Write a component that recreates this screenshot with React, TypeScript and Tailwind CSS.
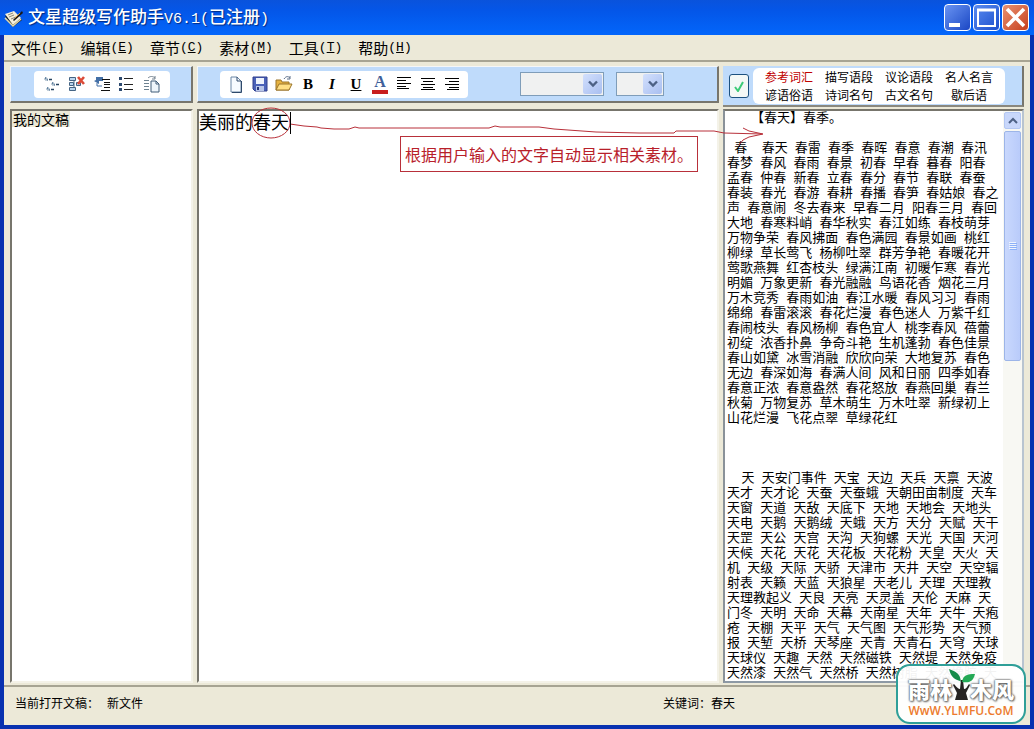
import { Fragment, useState } from "react";
import type { ReactNode } from "react";

const MENUS = [
  { label: "文件", key: "F" },
  { label: "编辑", key: "E" },
  { label: "章节", key: "C" },
  { label: "素材", key: "M" },
  { label: "工具", key: "T" },
  { label: "帮助", key: "H" },
];

const TABS = [
  "参考词汇",
  "描写语段",
  "议论语段",
  "名人名言",
  "谚语俗语",
  "诗词名句",
  "古文名句",
  "歇后语",
];

const SPRING = [
  " 春  春天 春雷 春季 春晖 春意 春潮 春汛",
  "春梦 春风 春雨 春景 初春 早春 暮春 阳春",
  "孟春 仲春 新春 立春 春分 春节 春联 春蚕",
  "春装 春光 春游 春耕 春播 春笋 春姑娘 春之",
  "声 春意闹 冬去春来 早春二月 阳春三月 春回",
  "大地 春寒料峭 春华秋实 春江如练 春枝萌芽",
  "万物争荣 春风拂面 春色满园 春景如画 桃红",
  "柳绿 草长莺飞 杨柳吐翠 群芳争艳 春暖花开",
  "莺歌燕舞 红杏枝头 绿满江南 初暖乍寒 春光",
  "明媚 万象更新 春光融融 鸟语花香 烟花三月",
  "万木竞秀 春雨如油 春江水暖 春风习习 春雨",
  "绵绵 春雷滚滚 春花烂漫 春色迷人 万紫千红",
  "春闹枝头 春风杨柳 春色宜人 桃李春风 蓓蕾",
  "初绽 浓香扑鼻 争奇斗艳 生机蓬勃 春色佳景",
  "春山如黛 冰雪消融 欣欣向荣 大地复苏 春色",
  "无边 春深如海 春满人间 风和日丽 四季如春",
  "春意正浓 春意盎然 春花怒放 春燕回巢 春兰",
  "秋菊 万物复苏 草木萌生 万木吐翠 新绿初上",
  "山花烂漫 飞花点翠 草绿花红",
];

const SKY = [
  "  天 天安门事件 天宝 天边 天兵 天禀 天波",
  "天才 天才论 天蚕 天蚕蛾 天朝田亩制度 天车",
  "天窗 天道 天敌 天底下 天地 天地会 天地头",
  "天电 天鹅 天鹅绒 天蛾 天方 天分 天赋 天干",
  "天罡 天公 天宫 天沟 天狗螺 天光 天国 天河",
  "天候 天花 天花 天花板 天花粉 天皇 天火 天",
  "机 天级 天际 天骄 天津市 天井 天空 天空辐",
  "射表 天籁 天蓝 天狼星 天老儿 天理 天理教",
  "天理教起义 天良 天亮 天灵盖 天伦 天麻 天",
  "门冬 天明 天命 天幕 天南星 天年 天牛 天疱",
  "疮 天棚 天平 天气 天气图 天气形势 天气预",
  "报 天堑 天桥 天琴座 天青 天青石 天穹 天球",
  "天球仪 天趣 天然 天然磁铁 天然堤 天然免疫",
  "天然漆 天然气 天然桥 天然树脂 天然橡胶 天",
];

function Lines({ rows }: { rows: string[] }) {
  return (
    <>
      {rows.map((row, i) => (
        <p key={i} className="h-[15px] whitespace-pre">
          {row.split(" ").map((word, j) => (
            <Fragment key={j}>
              {j > 0 && " "}
              <span className="text-[13px]">{word}</span>
            </Fragment>
          ))}
        </p>
      ))}
    </>
  );
}

function IconButton({ label, children }: { label: string; children: ReactNode }) {
  return (
    <button type="button" aria-label={label} className="flex size-5 items-center justify-center">
      <svg viewBox="0 0 18 18" className="size-[18px]" fill="none">
        {children}
      </svg>
    </button>
  );
}

function OutlineTools() {
  return (
    <div className="flex h-[27px] items-center gap-[5px] rounded bg-white px-2">
      <IconButton label="新建章节">
        <path d="M2 3h2v2H2zM9 8h2v2H9zM4 13h2v2H4z" stroke="#8aa2b6" />
        <path d="M2 3h1M4 5h1M9 8h1M11 10h1M4 13h1M6 15h1" stroke="#1d4a78" />
        <path d="M6 4.500h3M13 9.500h3M8 14.500h3" stroke="#27435f" strokeWidth="1.300" />
      </IconButton>
      <IconButton label="删除章节">
        <path d="M8 4.500H6v9h2M2 8.500h4" stroke="#4b6a88" />
        <path d="M1.500 2.500h6v3h-6zM1.500 7.500h4v3h-4zM1.500 12.500h6v3h-6zM8.500 7.500h4v3h-4z" fill="#b9d5ef" stroke="#456484" />
        <path d="m10 2 6 7m0-7-6 7" stroke="#dc4b38" strokeWidth="2.600" />
      </IconButton>
      <IconButton label="移动章节">
        <path d="M3 2h7v4H6v3L1 6l2-1z" fill="#436fa6" />
        <path d="M9 4.500h8M11 7.500h6M11 9.500h6M11 12.500h6M8 15.500h9" stroke="#111" />
        <path d="M4 8v3h5" stroke="#436fa6" />
      </IconButton>
      <IconButton label="章节列表">
        <path d="M1 2h3v3H1zM1 8h3v3H1zM1 13h3v3H1z" fill="#2d4a70" />
        <path d="M6 3.500h9M6 9.500h9M6 14.500h9" stroke="#222" />
      </IconButton>
      <IconButton label="复制章节">
        <path d="M1 5.500h5M1 8.500h5M1 11.500h5M1 14.500h5" stroke="#6e8290" />
        <path d="M8 6h5l3 3v8H8z" fill="#eef5fb" stroke="#405d78" />
        <path d="M13 6v3h3" stroke="#405d78" />
        <path d="M5 3c2-2 5-2 7 0M12 1v3H9" stroke="#6f7e8c" />
      </IconButton>
    </div>
  );
}

function EditTools() {
  return (
    <div className="flex h-[27px] items-center gap-1 rounded bg-white px-1.5">
      <IconButton label="新建">
        <path d="M4 2h6l4 4v11H4z" fill="#f7fbff" stroke="#6a86a5" />
        <path d="M10 2v4h4M14.500 6v11.500H5" stroke="#2e496b" />
      </IconButton>
      <IconButton label="保存">
        <path d="M2 2h14v14H4l-2-2z" fill="#4a61b8" stroke="#2e3f8c" />
        <path d="M5 3h8v6H5z" fill="#eef3fc" />
        <path d="M5 11h8v5H5z" fill="#b9c6e8" />
        <path d="M6 12h2v3H6z" fill="#26357a" />
      </IconButton>
      <IconButton label="打开">
        <path d="M1 15V5h5l1 2h7v8z" fill="#e6b240" stroke="#9a742a" />
        <path d="m1 15 3-6h13l-3 6z" fill="#ffdf84" stroke="#9a742a" />
        <path d="M9 4c2-3 4-3 6-1m0-2v3h-3" stroke="#5c6f88" />
      </IconButton>
      <button type="button" className="size-5 font-[Liberation_Serif,serif] text-[15px] leading-5 font-bold">
        B
      </button>
      <button type="button" className="size-5 font-[Liberation_Serif,serif] text-[15px] leading-5 font-bold italic">
        I
      </button>
      <button
        type="button"
        className="size-5 font-[Liberation_Serif,serif] text-[15px] leading-5 font-bold underline"
      >
        U
      </button>
      <button
        type="button"
        className="flex size-5 flex-col items-center font-[Liberation_Serif,serif] text-base leading-4 font-bold text-[#3f5f9a]"
      >
        A
        <span className="h-1 w-4 bg-[#c81e1e]" />
      </button>
      <IconButton label="左对齐">
        <path d="M2 2.500h14M2 5.500h9M2 8.500h14M2 11.500h9M2 13.500h12" stroke="#000" />
      </IconButton>
      <IconButton label="居中">
        <path d="M2 3.500h14M4 6.500h10M2 9.500h14M4 12.500h10M2 14.500h14" stroke="#000" />
      </IconButton>
      <IconButton label="右对齐">
        <path d="M2 3.500h14M6 6.500h10M2 9.500h14M6 12.500h10M4 14.500h12" stroke="#000" />
      </IconButton>
    </div>
  );
}

function Picker({ label, wide }: { label: string; wide?: boolean }) {
  return (
    <div className={`relative h-6 ${wide ? "w-[84px]" : "w-12"}`}>
      <select
        aria-label={label}
        className="size-full appearance-none border border-[#7f9db9] bg-[#f0f1f1] outline-none"
      >
        <option value=""></option>
      </select>
      <span className="pointer-events-none absolute inset-y-0.5 right-0.5 flex w-[19px] items-center justify-center rounded-xs bg-linear-to-br from-[#d3e0fd] to-[#a9bff0]">
        <svg viewBox="0 0 10 8" className="h-2 w-2.5" fill="none">
          <path d="m1 1.500 4 4 4-4" stroke="#4d6185" strokeWidth="2.400" />
        </svg>
      </span>
    </div>
  );
}

function ToolStrip({ children }: { children: ReactNode }) {
  return (
    <div className="flex h-[37px] shrink-0 items-center border-t border-r-2 border-b-2 border-l border-t-[#f4f6f8] border-r-[#77756c] border-b-[#77756c] border-l-[#f4f6f8] bg-[#bfdbfb]">
      {children}
    </div>
  );
}

function Scrollbar() {
  return (
    <div className="flex w-[19px] shrink-0 flex-col gap-0.5 bg-[#f8f8f3] p-px">
      <button
        type="button"
        aria-label="向上滚动"
        className="flex h-[17px] items-center justify-center rounded-xs border border-[#b3c7f3] bg-[#c8d7fb]"
      >
        <svg viewBox="0 0 10 8" className="h-2 w-2.5" fill="none">
          <path d="m1 6 4-4 4 4" stroke="#4d6185" strokeWidth="2" />
        </svg>
      </button>
      <div className="flex h-[230px] items-center justify-center rounded-xs border border-[#9db5e8] bg-linear-to-r from-[#c9d8fd] to-[#b9cbfa]">
        <svg viewBox="0 0 8 8" className="size-2">
          <path d="M0 .5h7M0 2.500h7M0 4.500h7M0 6.500h7" stroke="#eef4fe" />
          <path d="M1 1.500h7M1 3.500h7M1 5.500h7M1 7.500h7" stroke="#8cb0f8" />
        </svg>
      </div>
    </div>
  );
}

function TitleBar() {
  const box = "flex size-[27px] items-center justify-center rounded-[4px] border border-white";
  return (
    <header className="flex h-[35px] shrink-0 items-center bg-linear-to-b from-[#0a53dc] via-[#0456e8] via-30% to-[#0366fb] px-1 text-white">
      <svg viewBox="0 0 20 20" className="size-5">
        <path d="m1 8 9-4 8 8-9 7z" fill="#1a1c20" />
        <path d="m1 6 9-3 7 7-8 7z" fill="#f5efd9" />
        <path d="m4 7 5-2M5 9l5-2M7 11l5-2" stroke="#8c8a7a" />
        <path d="m1 10 8 8 8-7" stroke="#e4d9a8" strokeWidth="1.500" fill="none" />
        <path d="M9 12 18 3l1 2-9 8z" fill="#1a1a1a" />
        <path d="m11 10 5-5" stroke="#d59b3c" />
      </svg>
      <h1 className="ml-1 flex-1 text-[17px] leading-6 font-medium [text-shadow:1px_1px_1px_#002a80]">
        文星超级写作助手
        <span className="font-[Liberation_Mono,monospace] text-[15px]">V6.1(</span>
        已注册
        <span className="font-[Liberation_Mono,monospace] text-[15px]">)</span>
      </h1>
      <div className="flex gap-0.5 pr-px">
        <button type="button" aria-label="最小化" className={`${box} bg-linear-to-br from-[#6a93f2] to-[#1c46c4]`}>
          <svg viewBox="0 0 25 25" className="size-[25px]">
            <path d="M4 18h11v4H4z" fill="#fff" />
          </svg>
        </button>
        <button type="button" aria-label="最大化" className={`${box} bg-linear-to-br from-[#5b8bf0] to-[#1c4dcc]`}>
          <svg viewBox="0 0 25 25" className="size-[25px]" fill="none">
            <path d="M4 5h17v16H4z" stroke="#fff" strokeWidth="2" />
            <path d="M3 5h19" stroke="#fff" strokeWidth="3" />
          </svg>
        </button>
        <button type="button" aria-label="关闭" className={`${box} bg-linear-to-br from-[#e89070] to-[#c63d18]`}>
          <svg viewBox="0 0 25 25" className="size-[25px]">
            <path d="m4 4 17 17m0-17L4 21" stroke="#fff" strokeWidth="3.600" />
          </svg>
        </button>
      </div>
    </header>
  );
}

function SiteBadge() {
  return (
    <div className="absolute right-2 bottom-[5px] flex h-[60px] w-[130px] flex-col items-center rounded-[14px] border-2 border-[#2f9f98] bg-white/95">
      <div className="flex h-9 items-end text-[22px] leading-7 font-black text-white [text-shadow:0_0_2px_#555,0_0_2px_#555,1px_1px_2px_#777]">
        雨林
        <svg viewBox="0 0 28 36" className="mx-[-5px] h-9 w-7">
          <path d="M7 18c3 4 5 5 6 5l1-9h2l1 9c2 0 3-2 5-5l1 1c-2 4-3 6-4 8l2 7H8l2-7-4-8z" fill="#262321" />
          <path d="M14 16C13 7 9 6 2 3c2 8 5 10 11 12" fill="#168c49" />
          <path d="M15 16c1-7 5-8 13-8-2 8-6 9-13 8" fill="#24a956" />
        </svg>
        木风
      </div>
      <span className="font-[Open_Sans,sans-serif] text-xs leading-[18px] font-semibold text-[#ec7a2c]">
        WwW.YLMFU.CoM
      </span>
    </div>
  );
}

export default function App() {
  const [tab, setTab] = useState(TABS[0]);
  const [text, setText] = useState("美丽的春天");

  return (
    <div className="relative flex min-h-screen flex-col bg-[#0831b0] font-[Noto_Sans_CJK_SC,sans-serif] text-black">
      <TitleBar />
      <div className="mx-1 mb-1 flex flex-1 flex-col bg-[#ece9d8]">
        <nav className="flex h-[25px] shrink-0 items-center gap-4 px-[7px] text-[15px] leading-6">
          {MENUS.map((m) => (
            <button key={m.key} type="button" className="flex items-center">
              {m.label}
              <span className="font-[Liberation_Mono,monospace] text-[13px]">
                (<u>{m.key}</u>)
              </span>
            </button>
          ))}
        </nav>

        <main className="flex flex-1 gap-1 border-t-2 border-t-[#a7a493] px-1.5 pt-1 pb-0.5">
          {/* Outline */}
          <section className="flex w-[183px] shrink-0 flex-col gap-1.5">
            <ToolStrip>
              <div className="ml-[23px]">
                <OutlineTools />
              </div>
            </ToolStrip>
            <div className="flex flex-1 items-start border-2 border-t-[#77756c] border-r-[#f4f2e8] border-b-[#f4f2e8] border-l-[#77756c] bg-white">
              <button type="button" className="bg-[#ece9d8] px-px text-sm leading-4">
                我的文稿
              </button>
            </div>
          </section>

          {/* Editor */}
          <section className="flex min-w-0 flex-1 flex-col gap-1.5">
            <ToolStrip>
              <div className="ml-[22px] flex flex-1">
                <EditTools />
              </div>
              <div className="mr-[53px] flex gap-3">
                <Picker label="字体" wide />
                <Picker label="字号" />
              </div>
            </ToolStrip>
            <div className="relative flex flex-1 border-2 border-t-[#77756c] border-r-[#f4f2e8] border-b-[#f4f2e8] border-l-[#77756c] bg-white">
              <textarea
                aria-label="正文"
                value={text}
                onChange={(e) => setText(e.target.value)}
                className="flex-1 resize-none text-lg leading-5 outline-none"
              />
              <svg
                viewBox="0 0 570 60"
                className="pointer-events-none absolute -top-1 left-0 z-10 h-[60px] w-[570px]"
                fill="none"
                stroke="#b8303a"
              >
                <ellipse cx="72" cy="16" rx="19" ry="15" />
                <path d="M91 17 105 19 118 20 122 21 135 22 150 22 156 20 160 21 290 21 296 19 301 20 340 20 355 22 397 25 440 26 475 26 477 24 515 24 525 26 563 27" />
                <path d="m544 21 6 3 14 3-14 3-6 3-4 5" />
                <path d="M91.500 5v22" stroke="#000" />
              </svg>
              <p className="absolute top-[25px] left-[201px] border border-[#b8303a] px-1 py-[5px] text-base leading-6 whitespace-nowrap text-[#b8202a]">
                根据用户输入的文字自动显示相关素材。
              </p>
            </div>
          </section>

          {/* References */}
          <section className="flex w-[301px] shrink-0 flex-col gap-0.5">
            <div className="flex h-[41px] shrink-0 items-center gap-1 border-r-2 border-b-2 border-r-[#77756c] border-b-[#8a887e] bg-[#bfdbfb] pl-1.5">
              <label className="relative flex h-6 w-5 items-center justify-center">
                <input
                  type="checkbox"
                  aria-label="自动显示素材"
                  defaultChecked
                  className="peer size-full appearance-none rounded-[3px] border border-[#1c5180] bg-[#f4f8f6]"
                />
                <svg viewBox="0 0 12 12" className="absolute hidden size-3 peer-checked:block" fill="none">
                  <path d="m2 7 3 4 5-9" stroke="#3ccb78" strokeWidth="2" />
                </svg>
              </label>
              <div className="grid grid-cols-4 gap-x-3 rounded-md bg-white px-3 text-xs leading-[18px]">
                {TABS.map((t) => (
                  <button
                    key={t}
                    type="button"
                    onClick={() => setTab(t)}
                    className={`w-12 whitespace-nowrap ${t === tab ? "text-[#c00000]" : ""}`}
                  >
                    {t}
                  </button>
                ))}
              </div>
            </div>
            <div className="flex flex-1 border-2 border-t-[#77756c] border-r-[#b8c4d0] border-b-[#8d99a5] border-l-[#8a9299] bg-white">
              <div className="min-w-0 flex-1 pl-0.5 font-[Liberation_Mono,Noto_Sans_CJK_SC,monospace] text-xs leading-[15px]">
                <p className="h-[15px] pl-6 text-[13px]">【春天】春季。</p>
                <div className="pt-[15px] pb-[45px]">
                  <Lines rows={SPRING} />
                </div>
                <Lines rows={SKY} />
              </div>
              <Scrollbar />
            </div>
          </section>
        </main>

        <footer className="flex h-10 shrink-0 items-center justify-between border-t-2 border-t-[#a7a493] pb-1.5 pl-[11px] text-xs">
          <p className="flex gap-2">
            <span>当前打开文稿：</span>
            <span>新文件</span>
          </p>
          <p className="w-[367px]">关键词：春天</p>
        </footer>
      </div>
      <SiteBadge />
    </div>
  );
}
